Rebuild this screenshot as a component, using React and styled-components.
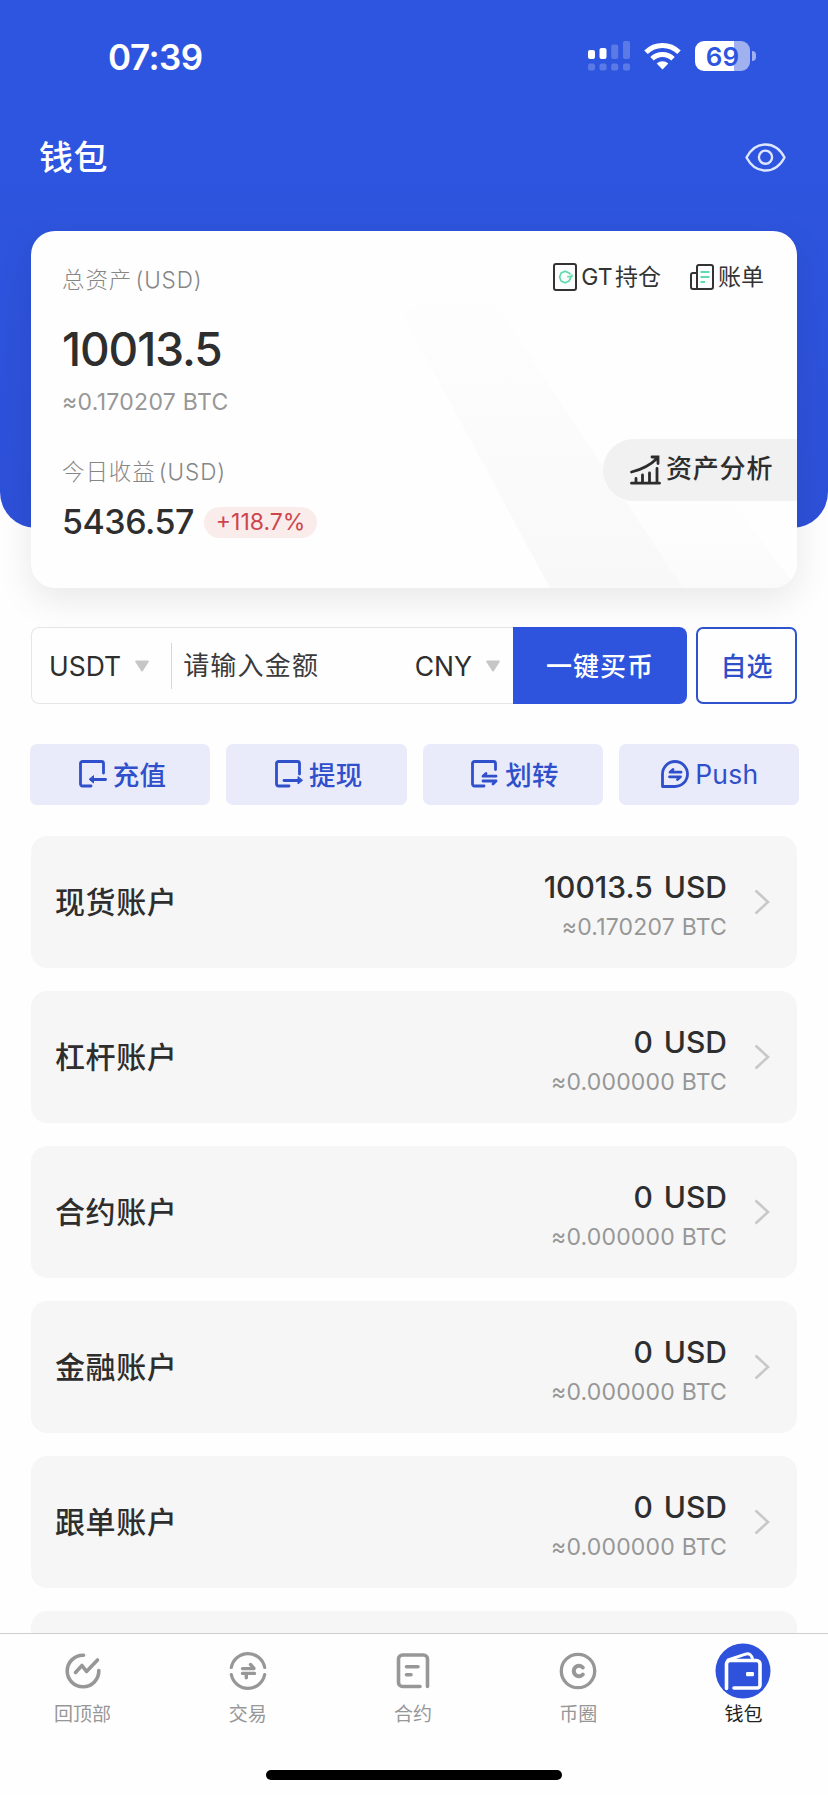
import React, { useState } from 'react';
import styled, { createGlobalStyle } from 'styled-components';

const GlobalStyle = createGlobalStyle`
  * {
    box-sizing: border-box;
  }

  body {
    margin: 0;
    background: #fff;
    font-family: Inter, 'Noto Sans CJK SC', sans-serif;
    color: #2e2e2e;
  }

  button {
    font-family: inherit;
    padding: 0;
    border: none;
    background: none;
    color: inherit;
    cursor: pointer;
  }

  svg {
    display: block;
    flex-shrink: 0;
  }
`;

const Page = styled.div`
  width: 828px;
  height: 1795px;
  overflow: hidden;
  display: flex;
  flex-direction: column;
  background: #fefefe;
`;

const Hero = styled.header`
  height: 528px;
  flex-shrink: 0;
  background: linear-gradient(#2e55df 0%, #2e55df 30%, #2d50d8 100%);
  border-radius: 0 0 36px 36px;
`;

const StatusBar = styled.div`
  height: 112px;
  padding: 0 72px 0 108px;
  display: flex;
  align-items: center;
  justify-content: space-between;
`;

const Clock = styled.span`
  padding-top: 1px;
  font-size: 35px;
  font-weight: 600;
  letter-spacing: -0.5px;
  color: #fff;
`;

const StatusIcons = styled.div`
  display: flex;
  align-items: center;
  gap: 14px;
`;

const Battery = styled.div`
  display: flex;
  align-items: center;
  gap: 2px;
`;

const BatteryLevel = styled.div`
  width: 55px;
  height: 30px;
  border-radius: 9px;
  display: flex;
  align-items: center;
  justify-content: center;
  background: linear-gradient(90deg, #fff 70%, #a1b1f0 70%);
  color: #2e55df;
  font-size: 26px;
  font-weight: 600;
`;

const BatteryCap = styled.div`
  width: 4px;
  height: 10px;
  border-radius: 0 5px 5px 0;
  background: #a1b1f0;
`;

const TitleBar = styled.div`
  height: 90px;
  padding: 0 42px 0 39px;
  display: flex;
  align-items: center;
  justify-content: space-between;
`;

const Title = styled.h1`
  margin: 0;
  padding-bottom: 4px;
  font-size: 34px;
  font-weight: 500;
  letter-spacing: 0.6px;
  color: #fff;
`;

const AssetCard = styled.section`
  position: relative;
  height: 357px;
  flex-shrink: 0;
  margin: -297px 31px 0;
  padding: 30px 0 0 31px;
  border-radius: 24px;
  background: #fefefe;
  box-shadow: 0 12px 36px rgba(0, 0, 0, 0.09);
`;

const CardPattern = styled.svg`
  position: absolute;
  inset: 0;
  border-radius: 24px;
`;

const CardTop = styled.div`
  position: relative;
  height: 38px;
  padding-right: 33px;
  display: flex;
  align-items: center;
  justify-content: space-between;
`;

const CardLinks = styled.div`
  display: flex;
  gap: 29px;
  padding-bottom: 6px;
`;

const CardLink = styled.button`
  display: flex;
  align-items: center;
  gap: 4px;
  font-size: 23px;
  line-height: 30px;
  word-spacing: -4px;
  color: #333;
`;

const Label = styled.div`
  font-size: 22.5px;
  line-height: 30px;
  font-weight: 300;
  letter-spacing: 0.9px;
  word-spacing: -4px;
  color: #868686;
`;

const CardBody = styled.div`
  position: relative;
  display: flex;
  justify-content: space-between;
`;

const Figures = styled.div`
  display: flex;
  flex-direction: column;
`;

const Total = styled.div`
  margin-top: 21px;
  font-size: 46px;
  line-height: 58px;
  font-weight: 500;
  letter-spacing: -1.1px;
`;

const BtcValue = styled.div`
  font-size: 23px;
  line-height: 30px;
  letter-spacing: 0.2px;
  color: #979797;
`;

const TotalBtc = styled(BtcValue)`
  margin: 9px 0 40px;
  letter-spacing: 0.3px;
`;

const ProfitRow = styled.div`
  margin-top: 14px;
  display: flex;
  align-items: center;
  gap: 10px;
`;

const Profit = styled.span`
  font-size: 34px;
  line-height: 42px;
  font-weight: 500;
  letter-spacing: -0.5px;
`;

const ProfitBadge = styled.span`
  height: 31px;
  padding: 0 12px;
  border-radius: 16px;
  background: #fbecec;
  color: #cd464c;
  font-size: 23px;
  line-height: 31px;
`;

const AnalysisButton = styled.button`
  align-self: flex-start;
  width: 194px;
  height: 62px;
  margin-top: 140px;
  padding: 0 0 0 27px;
  display: flex;
  align-items: center;
  gap: 5px;
  border-radius: 31px 0 0 31px;
  background: #f1f1f1;
  font-size: 26px;
  font-weight: 500;
  letter-spacing: 0.8px;
`;

const AnalysisText = styled.span`
  padding-bottom: 8px;
`;

const BuyRow = styled.div`
  height: 77px;
  flex-shrink: 0;
  margin: 39px 31px 0;
  display: flex;
  gap: 9px;
`;

const BuyForm = styled.div`
  flex: 1;
  min-width: 0;
  display: flex;
`;

const AmountBox = styled.div`
  flex: 1;
  min-width: 0;
  display: flex;
  align-items: center;
  padding: 0 13px 0 17px;
  border: 1px solid #e6e6e6;
  border-right: none;
  border-radius: 8px 0 0 8px;
`;

const Currency = styled.button`
  display: flex;
  align-items: center;
  gap: 14px;
  font-size: 26.5px;
  line-height: 34px;
`;

const Divider = styled.span`
  width: 1px;
  height: 46px;
  flex-shrink: 0;
  margin: 0 11px 0 22px;
  background: #d6d6d6;
`;

const AmountInput = styled.input`
  flex: 1;
  width: 0;
  min-width: 0;
  padding: 0;
  border: none;
  outline: none;
  background: transparent;
  font-family: inherit;
  font-size: 26px;
  letter-spacing: 1.2px;

  &::placeholder {
    color: #3a3a3a;
    opacity: 1;
  }
`;

const BuyButton = styled.button`
  width: 174px;
  flex-shrink: 0;
  padding-bottom: 2px;
  border-radius: 0 8px 8px 0;
  background: #2e53dc;
  color: #fff;
  font-size: 26px;
  font-weight: 500;
  letter-spacing: 1px;
`;

const PickButton = styled.button`
  width: 101px;
  flex-shrink: 0;
  padding-bottom: 2px;
  border: 2px solid #2f52cd;
  border-radius: 7px;
  color: #2f4fc8;
  font-size: 26px;
  font-weight: 500;
`;

const Actions = styled.div`
  height: 61px;
  flex-shrink: 0;
  margin: 40px 29px 0 30px;
  display: grid;
  grid-template-columns: repeat(4, 1fr);
  gap: 16px;
`;

const ActionButton = styled.button`
  padding: 0 0 2px ${props => props.$latin ? '2px' : '5px'};
  display: flex;
  align-items: center;
  justify-content: center;
  gap: 6px;
  border-radius: 7px;
  background: #e9ebfb;
  color: #2f4fcb;
  font-size: 26.5px;
  font-weight: ${props => props.$latin ? 400 : 500};
  letter-spacing: 0.3px;
`;

const AccountList = styled.main`
  flex: 1;
  min-height: 0;
  overflow: hidden;
  margin: 31px 31px 0;
  display: flex;
  flex-direction: column;
  gap: 23px;
`;

const AccountRow = styled.div`
  height: 132px;
  flex-shrink: 0;
  padding: 0 27px 0 24px;
  display: flex;
  align-items: center;
  border-radius: 16px;
  background: #f6f6f6;
`;

const AccountName = styled.span`
  flex: 1;
  padding-bottom: 4px;
  font-size: 30px;
  font-weight: 500;
  letter-spacing: 0.6px;
`;

const AccountFigures = styled.div`
  margin-right: 27px;
  padding-top: 4px;
  text-align: right;
`;

const AccountUsd = styled.div`
  margin-bottom: 5px;
  font-size: 30px;
  line-height: 40px;
  font-weight: 500;
  word-spacing: 3px;
`;

const TabBar = styled.nav`
  height: 162px;
  flex-shrink: 0;
  display: flex;
  flex-direction: column;
  align-items: center;
  border-top: 1px solid #cfcfcf;
  background: #fefefe;
`;

const Tabs = styled.div`
  width: 100%;
  height: 136px;
  padding-right: 2px;
  display: grid;
  grid-template-columns: repeat(5, 1fr);
`;

const Tab = styled.button`
  padding-top: 9px;
  display: flex;
  flex-direction: column;
  align-items: center;
  font-size: 19px;
  line-height: 28px;
  color: ${props => props.$active ? '#222' : '#979797'};
`;

const TabIcon = styled.span`
  width: 56px;
  height: 56px;
  margin-bottom: 2px;
  display: flex;
  align-items: center;
  justify-content: center;
`;

const HomeIndicator = styled.div`
  width: 296px;
  height: 10px;
  border-radius: 5px;
  background: #000;
`;

const SignalIcon = () => (
  <svg width="42" height="30" viewBox="0 0 42 30" fill="#fff">
    <rect x="0" y="9" width="7" height="9" rx="2" />
    <rect x="11.5" y="7" width="7" height="11" rx="2" />
    <g fillOpacity="0.22">
      <rect x="23.2" y="3.5" width="7" height="14.5" rx="2" />
      <rect x="35" y="0" width="7" height="18" rx="2" />
      <rect x="0" y="22.5" width="7" height="7" rx="2" />
      <rect x="11.5" y="22.5" width="7" height="7" rx="2" />
      <rect x="23.2" y="22.5" width="7" height="7" rx="2" />
      <rect x="35" y="22.5" width="7" height="7" rx="2" />
    </g>
  </svg>
);

const WifiIcon = () => (
  <svg width="37" height="28" viewBox="0 0 37 28" fill="none" stroke="#fff" strokeWidth="5">
    <path d="M2 10.2a23.5 23.5 0 0 1 33 0" />
    <path d="M8 16.8a15 15 0 0 1 21 0" />
    <path d="M18.5 27.5l-5.8-5.9a8.3 8.3 0 0 1 11.6 0z" fill="#fff" stroke="none" />
  </svg>
);

const EyeIcon = () => (
  <svg width="41" height="29" viewBox="0 0 41 29" fill="none" stroke="#dfe6ff" strokeWidth="2.4">
    <path d="M1.5 14.5C6 6 12.5 1.5 20.5 1.5S35 6 39.5 14.5C35 23 28.5 27.5 20.5 27.5S6 23 1.5 14.5z" strokeLinejoin="round" />
    <circle cx="20.5" cy="14.2" r="6.6" />
  </svg>
);

const PositionIcon = () => (
  <svg width="24" height="28" viewBox="0 0 24 28" fill="none">
    <rect x="1" y="1" width="22" height="26" rx="2" stroke="#333" strokeWidth="2" />
    <path d="M17.5 11.5L16 10L12.2 8.3L8.2 10L6.6 14L8.2 18L12.2 19.8L16 18L17.8 14.5M14.2 13.6h4.6v-2.2" stroke="#5fdcae" strokeWidth="1.7" />
  </svg>
);

const BillIcon = () => (
  <svg width="24" height="26" viewBox="0 0 24 26" fill="none" stroke="#333" strokeWidth="2" strokeLinejoin="round">
    <path d="M7 25V3a2 2 0 0 1 2-2h12a2 2 0 0 1 2 2v20a2 2 0 0 1-2 2H3a2 2 0 0 1-2-2V11a2 2 0 0 1 2-2h4" />
    <path d="M10.5 8h9M10.5 13h9M10.5 18h4.5" stroke="#5fdcae" />
  </svg>
);

const ChartIcon = () => (
  <svg width="31" height="30" viewBox="0 0 31 30" fill="none" stroke="#2c2c2c" strokeWidth="2.8" strokeLinecap="round">
    <path d="M1.5 17C12 14.5 20.5 10 27.5 3M22 2H28V8.5" />
    <path d="M1.5 28.2H29.5M6 23.500V28M12.5 20V28M19.5 18V28M27 13.5V28" />
  </svg>
);

const CaretIcon = () => (
  <svg width="14" height="12" viewBox="0 0 14 12" fill="#c6c6c6" stroke="#c6c6c6" strokeWidth="2" strokeLinejoin="round">
    <path d="M1.2 1.5h11.6L7 10.5z" />
  </svg>
);

const ActionSvg = ({ children }) => (
  <svg width="28" height="28" viewBox="0 0 28 28" fill="none" stroke="currentColor" strokeWidth="2.8" strokeLinejoin="round" strokeLinecap="round">
    {children}
  </svg>
);

const DepositIcon = () => (
  <ActionSvg>
    <path d="M12 26H3.5A2 2 0 0 1 1.5 24V3.5A2 2 0 0 1 3.5 1.5H22.5A2 2 0 0 1 24.5 3.5V13" />
    <path d="M26.600 19.5H12" />
    <path d="M14.5 16V23L10.5 19.5z" fill="currentColor" strokeWidth="1" />
  </ActionSvg>
);

const WithdrawIcon = () => (
  <ActionSvg>
    <path d="M14 26H3.5A2 2 0 0 1 1.5 24V3.5A2 2 0 0 1 3.5 1.5H22.5A2 2 0 0 1 24.5 3.5V14" />
    <path d="M9 20.5H24" />
    <path d="M23 17V24L27.3 20.5z" fill="currentColor" strokeWidth="1" />
  </ActionSvg>
);

const TransferIcon = () => (
  <ActionSvg>
    <path d="M13 26H3.5A2 2 0 0 1 1.5 24V3.5A2 2 0 0 1 3.5 1.5H22.5A2 2 0 0 1 24.5 3.5V9.5" />
    <path d="M25 16.2H12L15 13.5" />
    <path d="M12 21H25L22 24" />
  </ActionSvg>
);

const PushIcon = () => (
  <ActionSvg>
    <path d="M1.5 26.5V14A12.5 12.5 0 1 1 14 26.5z" />
    <path d="M20 12.2H9L12 9.5" />
    <path d="M8.500 16.8H19.5L16.5 19.5" />
  </ActionSvg>
);

const ChevronIcon = () => (
  <svg width="16" height="26" viewBox="0 0 16 26" fill="none" stroke="#c8c8c8" strokeWidth="2.6">
    <path d="M1.5 1.5L14 13L1.5 24.5" />
  </svg>
);

const TabSvg = ({ children }) => (
  <svg width="38" height="38" viewBox="0 0 38 38" fill="none" stroke="#979797" strokeWidth="3.6" strokeLinecap="round" strokeLinejoin="round">
    {children}
  </svg>
);

const TopIcon = () => (
  <TabSvg>
    <path d="M19.5 3.2A15.8 15.8 0 1 0 34.8 18.5" />
    <path d="M11.5 20.5L18 13.5L22.5 19.5L33.5 8" />
  </TabSvg>
);

const TradeIcon = () => (
  <TabSvg>
    <path d="M2.3 15.500A17 17 0 0 1 35.7 15.5M2.3 22.5A17 17 0 0 0 35.7 22.5" strokeWidth="3.2" />
    <path d="M13.5 16.6H25M21.5 12.500L24.8 16.2M13.5 21.4H25.500M17.300 25.800V22" strokeWidth="3.4" />
  </TabSvg>
);

const ContractIcon = () => (
  <TabSvg>
    <path d="M33.5 34.500V7A4 4 0 0 0 29.5 3H8.5A4 4 0 0 0 4.5 7V30.5A4 4 0 0 0 8.5 34.5H26" />
    <path d="M12.500 14.800H24M12.500 22.800H17" />
  </TabSvg>
);

const CircleIcon = () => (
  <TabSvg>
    <circle cx="19" cy="19" r="16.7" strokeWidth="3.3" />
    <path d="M23.8 15.5A5.2 5.2 0 1 0 23.8 22.5" strokeWidth="4" />
  </TabSvg>
);

const WalletIcon = () => (
  <svg width="56" height="56" viewBox="0 0 56 56" fill="none" stroke="#fff" strokeWidth="3.6" strokeLinecap="round" strokeLinejoin="round">
    <circle cx="28" cy="28" r="27.5" fill="#2e52dc" stroke="none" />
    <path d="M11.5 45.5V21A3.5 3.5 0 0 1 15 17.5H41.5A3.5 3.5 0 0 1 45 21V42A3 3 0 0 1 42 45H19" />
    <path d="M13 17L30.500 11.200C34.500 10 36.500 12 37.500 16" strokeWidth="3" />
    <rect x="31" y="29" width="8" height="4.2" rx="1.2" fill="#fff" stroke="none" />
  </svg>
);

const actions = [
  { label: '充值', icon: DepositIcon },
  { label: '提现', icon: WithdrawIcon },
  { label: '划转', icon: TransferIcon },
  { label: 'Push', icon: PushIcon, latin: true },
];

const accounts = [
  { name: '现货账户', usd: '10013.5', btc: '0.170207' },
  { name: '杠杆账户', usd: '0', btc: '0.000000' },
  { name: '合约账户', usd: '0', btc: '0.000000' },
  { name: '金融账户', usd: '0', btc: '0.000000' },
  { name: '跟单账户', usd: '0', btc: '0.000000' },
];

const tabs = [
  { label: '回顶部', icon: TopIcon },
  { label: '交易', icon: TradeIcon },
  { label: '合约', icon: ContractIcon },
  { label: '币圈', icon: CircleIcon },
  { label: '钱包', icon: WalletIcon },
];

const App = () => {
  const [amount, setAmount] = useState('');

  return (
    <Page>
      <GlobalStyle />
      <Hero>
        <StatusBar>
          <Clock>07:39</Clock>
          <StatusIcons>
            <SignalIcon />
            <WifiIcon />
            <Battery>
              <BatteryLevel>69</BatteryLevel>
              <BatteryCap />
            </Battery>
          </StatusIcons>
        </StatusBar>
        <TitleBar>
          <Title>钱包</Title>
          <EyeIcon />
        </TitleBar>
      </Hero>

      <AssetCard>
        <CardPattern width="766" height="357" viewBox="0 0 766 357">
          <defs>
            <linearGradient id="band" x1="0" y1="0" x2="0" y2="1">
              <stop offset="0" stopColor="#f8f8f8" stopOpacity="0" />
              <stop offset="1" stopColor="#f8f8f8" />
            </linearGradient>
          </defs>
          <path d="M370 80L450 50L652 357H519z" fill="url(#band)" />
          <path d="M590 260L700 270L766 357H652z" fill="url(#band)" opacity="0.6" />
        </CardPattern>
        <CardTop>
          <Label>总资产 (USD)</Label>
          <CardLinks>
            <CardLink><PositionIcon />GT 持仓</CardLink>
            <CardLink><BillIcon />账单</CardLink>
          </CardLinks>
        </CardTop>
        <CardBody>
          <Figures>
            <Total>10013.5</Total>
            <TotalBtc>≈0.170207 BTC</TotalBtc>
            <Label>今日收益 (USD)</Label>
            <ProfitRow>
              <Profit>5436.57</Profit>
              <ProfitBadge>+118.7%</ProfitBadge>
            </ProfitRow>
          </Figures>
          <AnalysisButton>
            <ChartIcon />
            <AnalysisText>资产分析</AnalysisText>
          </AnalysisButton>
        </CardBody>
      </AssetCard>

      <BuyRow>
        <BuyForm>
          <AmountBox>
            <Currency>USDT<CaretIcon /></Currency>
            <Divider />
            <AmountInput
              placeholder="请输入金额"
              value={amount}
              onChange={(e) => setAmount(e.target.value)}
            />
            <Currency>CNY<CaretIcon /></Currency>
          </AmountBox>
          <BuyButton>一键买币</BuyButton>
        </BuyForm>
        <PickButton>自选</PickButton>
      </BuyRow>

      <Actions>
        {actions.map(({ label, icon: Icon, latin }) => (
          <ActionButton key={label} $latin={latin}>
            <Icon />
            {label}
          </ActionButton>
        ))}
      </Actions>

      <AccountList>
        {accounts.map((account) => (
          <AccountRow key={account.name}>
            <AccountName>{account.name}</AccountName>
            <AccountFigures>
              <AccountUsd>{account.usd} USD</AccountUsd>
              <BtcValue>≈{account.btc} BTC</BtcValue>
            </AccountFigures>
            <ChevronIcon />
          </AccountRow>
        ))}
        <AccountRow />
      </AccountList>

      <TabBar>
        <Tabs>
          {tabs.map(({ label, icon: Icon }) => (
            <Tab key={label} $active={label === '钱包'}>
              <TabIcon><Icon /></TabIcon>
              {label}
            </Tab>
          ))}
        </Tabs>
        <HomeIndicator />
      </TabBar>
    </Page>
  );
};

export default App;
